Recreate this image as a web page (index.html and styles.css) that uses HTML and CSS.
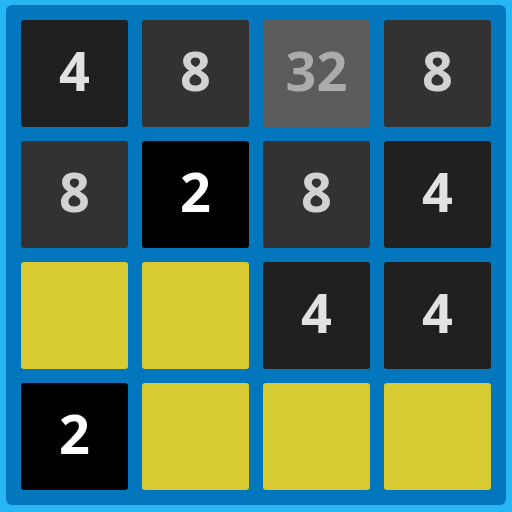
FILE: index.html
```html
<!DOCTYPE html>
<html>
<head>
<meta charset="utf-8">
<link rel="stylesheet" href="styles.css">
</head>
<body>
<div class="board">
  <div class="tile t4">4</div>
  <div class="tile t8">8</div>
  <div class="tile t32">32</div>
  <div class="tile t8">8</div>
  <div class="tile t8">8</div>
  <div class="tile t2">2</div>
  <div class="tile t8">8</div>
  <div class="tile t4">4</div>
  <div class="tile empty"></div>
  <div class="tile empty"></div>
  <div class="tile t4">4</div>
  <div class="tile t4">4</div>
  <div class="tile t2">2</div>
  <div class="tile empty"></div>
  <div class="tile empty"></div>
  <div class="tile empty"></div>
</div>
</body>
</html>
```

FILE: styles.css
```css
html, body {
  margin: 0;
  padding: 0;
  width: 512px;
  height: 512px;
  background: #29b6f6;
  overflow: hidden;
}
body {
  padding: 5px 6px 0 6px;
  box-sizing: border-box;
}
.board {
  width: 500px;
  height: 500px;
  box-sizing: border-box;
  background: #0277bd;
  border-radius: 6px;
  padding: 15px;
  display: grid;
  grid-template-columns: repeat(4, 107px);
  grid-template-rows: repeat(4, 107px);
  gap: 14px;
}
.tile {
  box-sizing: border-box;
  padding-bottom: 7px;
  border-radius: 3px;
  display: flex;
  align-items: center;
  justify-content: center;
  font-family: "Open Sans", sans-serif;
  font-weight: 700;
  font-size: 54px;
  line-height: 1;
}
.t2 { background: #000000; color: #ffffff; }
.t4 { background: #202020; color: #e2e2e2; }
.t8 { background: #323232; color: #d2d2d2; }
.t32 { background: #5b5b5b; color: #ababab; }
.empty { background: #d7ca33; }
```
